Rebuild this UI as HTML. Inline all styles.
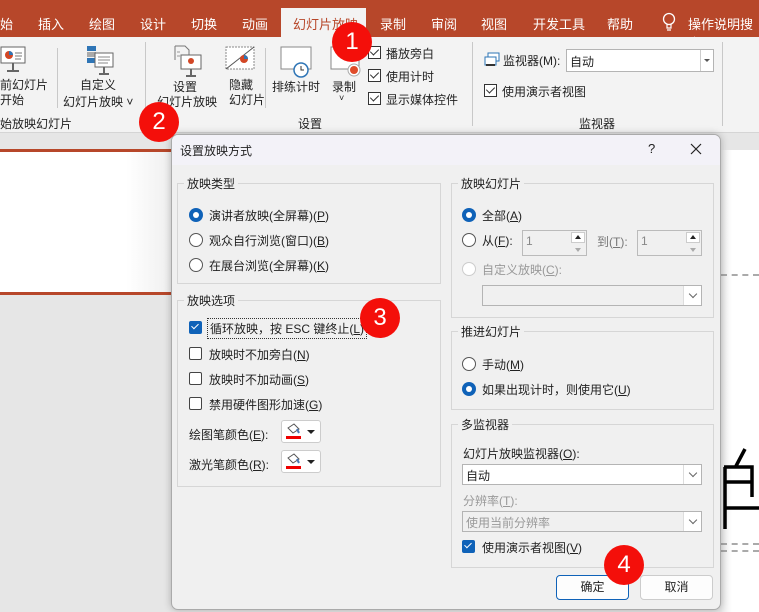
<!DOCTYPE html>
<html><head><meta charset="utf-8"><style>
*{margin:0;padding:0;box-sizing:border-box}
body{width:759px;height:612px;overflow:hidden;position:relative;background:#e6e6e6;font-family:"Liberation Sans","Noto Sans CJK SC",sans-serif;font-size:12px;color:#222}
.a{position:absolute;white-space:nowrap}
.tab{position:absolute;top:14px;color:#fff;font-size:13px}
.sep{position:absolute;width:1px;background:#c8c8c8}
.red{position:absolute;width:40px;height:40px;border-radius:50%;background:#f40f0a;color:#fff;font-size:24px;text-align:center;line-height:40px;font-family:"Liberation Sans",sans-serif}
.cb{position:absolute;width:13px;height:13px;border:1px solid #444;background:#fff;border-radius:2px}
.cbk{position:absolute;width:13px;height:13px;border:1px solid #333;background:#fff}
.cbk:after,.cbon:after{content:"";position:absolute;left:3px;top:0px;width:4px;height:7px;border:solid #333;border-width:0 1.5px 1.5px 0;transform:rotate(45deg)}
.cbon{position:absolute;width:13px;height:13px;background:#0f62b8;border-radius:2px}
.cbon:after{border-color:#fff;left:4px;top:1px;width:3px;height:6px}
.rad{position:absolute;width:14px;height:14px;border-radius:50%;border:1px solid #555;background:#fff}
.radon{position:absolute;width:14px;height:14px;border-radius:50%;background:#0f62b8}
.radon:after{content:"";position:absolute;left:4px;top:4px;width:6px;height:6px;border-radius:50%;background:#fff}
.grp{position:absolute;border:1px solid #d6d6d6}
.gl{position:absolute;top:-9px;left:6px;background:#f0f0f0;padding:0 3px}
.combo{position:absolute;border:1px solid #b4b4b4;background:#fff;height:21px}
.combo .dd{position:absolute;right:0;top:0;width:18px;height:19px;border-left:1px solid #ddd;background:#fff}
.combo .dd:after{content:"";position:absolute;left:6px;top:5px;width:5px;height:5px;border:solid #666;border-width:0 1px 1px 0;transform:rotate(45deg)}
.dis{color:#999}
u{text-decoration:underline}
</style></head><body>
<div class="a" style="left:0;top:0;width:759px;height:37px;background:#b7472a"></div>
<div class="a" style="left:281px;top:8px;width:85px;height:30px;background:#f3f3f3"></div>
<span class="tab" style="left:0">始</span>
<span class="tab" style="left:38px">插入</span>
<span class="tab" style="left:89px">绘图</span>
<span class="tab" style="left:140px">设计</span>
<span class="tab" style="left:191px">切换</span>
<span class="tab" style="left:242px">动画</span>
<span class="tab" style="left:293px;color:#b7472a">幻灯片放映</span>
<span class="tab" style="left:380px">录制</span>
<span class="tab" style="left:431px">审阅</span>
<span class="tab" style="left:481px">视图</span>
<span class="tab" style="left:533px">开发工具</span>
<span class="tab" style="left:607px">帮助</span>
<svg class="a" style="left:662px;top:12px" width="14" height="20"><circle cx="7" cy="7" r="5.5" fill="none" stroke="#fff" stroke-width="1.3"/><path d="M5 12v4h4v-4M5 18h4" stroke="#fff" stroke-width="1.2" fill="none"/></svg>
<span class="tab" style="left:688px">操作说明搜索</span>
<div class="a" style="left:0;top:37px;width:759px;height:96px;background:#f3f3f3;border-bottom:1px solid #d5d5d5"></div>
<div class="sep" style="left:57px;top:48px;height:60px"></div>
<div class="sep" style="left:145px;top:42px;height:84px"></div>
<div class="sep" style="left:265px;top:48px;height:60px"></div>
<div class="sep" style="left:472px;top:42px;height:84px"></div>
<div class="sep" style="left:722px;top:42px;height:84px"></div>
<svg class="a" style="left:0;top:44px" width="30" height="34"><rect x="1" y="3" width="24" height="16" fill="#fff" stroke="#666"/><circle cx="9" cy="11" r="4" fill="#d24726"/><path d="M9 11V7a4 4 0 0 1 4 4z" fill="#2e75b6"/><path d="M15 9h7M15 12h7M15 15h6" stroke="#777"/><path d="M13 19v7M7 27h12" stroke="#666" stroke-width="2"/></svg>
<svg class="a" style="left:86px;top:44px" width="30" height="34"><rect x="1" y="2" width="9" height="5" fill="#2e75b6"/><rect x="1" y="8" width="9" height="5" fill="#aaa"/><rect x="1" y="14" width="9" height="5" fill="#2e75b6"/><rect x="9" y="9" width="18" height="14" fill="#fff" stroke="#666"/><path d="M12 13h12M12 16h12M12 19h10" stroke="#888"/><path d="M18 23v6M13 30h10" stroke="#666" stroke-width="2"/></svg>
<svg class="a" style="left:171px;top:44px" width="34" height="36"><path d="M4 2h10l4 4v6" fill="none" stroke="#777"/><path d="M4 2v14" stroke="#777"/><rect x="10" y="11" width="20" height="14" fill="#fff" stroke="#666"/><circle cx="20" cy="17" r="3" fill="#d24726"/><path d="M6 8h3M6 12h3" stroke="#999"/><path d="M20 25v6M15 32h10" stroke="#666" stroke-width="2"/></svg>
<svg class="a" style="left:225px;top:46px" width="30" height="26"><rect x="1" y="1" width="28" height="22" fill="#fff" stroke="#888" stroke-dasharray="2 1"/><path d="M1 23L29 1" stroke="#555"/><circle cx="19" cy="13" r="4" fill="#d24726"/><path d="M19 13v-4a4 4 0 0 1 4 4z" fill="#2e75b6"/></svg>
<svg class="a" style="left:280px;top:46px" width="34" height="34"><rect x="1" y="1" width="30" height="22" fill="#fff" stroke="#888"/><circle cx="21" cy="24" r="7" fill="#fff" stroke="#2e75b6" stroke-width="1.5"/><path d="M21 20v4h3" stroke="#333" fill="none"/></svg>
<svg class="a" style="left:330px;top:46px" width="34" height="34"><rect x="1" y="1" width="28" height="22" fill="#fff" stroke="#888"/><circle cx="24" cy="24" r="6" fill="#fff" stroke="#aaa"/><circle cx="24" cy="24" r="4" fill="#e04c2a"/></svg>
<div class="a" style="left:0;top:78px;font-size:12px;line-height:15px">前幻灯片<br>开始</div>
<div class="a" style="left:80px;top:78px;line-height:15px">自定义</div>
<div class="a" style="left:63px;top:93px">幻灯片放映 ˅</div>
<div class="a" style="left:173px;top:78px">设置</div>
<div class="a" style="left:157px;top:93px">幻灯片放映</div>
<div class="a" style="left:229px;top:78px;line-height:15px">隐藏<br>幻灯片</div>
<div class="a" style="left:272px;top:78px">排练计时</div>
<div class="a" style="left:332px;top:78px">录制</div>
<div class="a" style="left:339px;top:93px;font-size:9px">˅</div>
<div class="cbk" style="left:368px;top:46px"></div><div class="a" style="left:386px;top:45px">播放旁白</div>
<div class="cbk" style="left:368px;top:69px"></div><div class="a" style="left:386px;top:68px">使用计时</div>
<div class="cbk" style="left:368px;top:92px"></div><div class="a" style="left:386px;top:91px">显示媒体控件</div>
<div class="a" style="left:0;top:115px">始放映幻灯片</div>
<div class="a" style="left:298px;top:115px">设置</div>
<div class="a" style="left:579px;top:115px">监视器</div>
<svg class="a" style="left:484px;top:52px" width="16" height="15"><rect x="4" y="1" width="11" height="8" fill="#fff" stroke="#2e75b6"/><rect x="1" y="5" width="11" height="8" fill="#fff" stroke="#2e75b6"/><path d="M2 13h9" stroke="#333" stroke-width="2"/></svg>
<div class="a" style="left:503px;top:52px">监视器(M):</div>
<div class="combo" style="left:566px;top:49px;width:148px;height:23px"><span class="a" style="left:3px;top:3px">自动</span><div class="a" style="right:0;top:0;width:13px;height:21px;border-left:1px solid #ccc"></div><div class="a" style="right:3px;top:9px;border:3px solid transparent;border-top:3px solid #555"></div></div>
<div class="cbk" style="left:484px;top:84px"></div><div class="a" style="left:502px;top:83px">使用演示者视图</div>
<div class="a" style="left:0;top:149px;width:180px;height:3px;background:#b7472a"></div>
<div class="a" style="left:0;top:152px;width:180px;height:140px;background:linear-gradient(90deg,#fff 70%,#ececec)"></div>
<div class="a" style="left:0;top:292px;width:180px;height:3px;background:#b7472a"></div>
<div class="a" style="left:720px;top:150px;width:39px;height:462px;background:linear-gradient(90deg,#e6e6e6,#fff 30%)"></div>
<div class="a" style="left:721px;top:274px;width:38px;border-top:2px dashed #aaa"></div>
<div class="a" style="left:721px;top:543px;width:38px;border-top:2px dashed #aaa"></div>
<div class="a" style="left:721px;top:550px;width:38px;border-top:2px dashed #aaa"></div>
<svg class="a" style="left:720px;top:440px" width="39" height="95"><path d="M25 9L16 26M4 27h28v30M4 42h28M4 68h35M5 27v62" stroke="#000" stroke-width="3.5" fill="none"/></svg>
<div class="a" style="left:171px;top:134px;width:550px;height:476px;background:#f0f0f0;border:1px solid #aaa;border-radius:7px;box-shadow:0 0 8px rgba(0,0,0,.25);overflow:hidden">
<div class="a" style="left:0;top:0;width:550px;height:30px;background:#f3f2f8"></div>
</div>
<div class="a" style="left:180px;top:142px;font-size:12px">设置放映方式</div>
<div class="a" style="left:648px;top:141px;font-size:13px">?</div>
<svg class="a" style="left:690px;top:143px" width="12" height="12"><path d="M1 1l10 10M11 1L1 11" stroke="#222" stroke-width="1.2"/></svg>
<div class="grp" style="left:177px;top:183px;width:264px;height:101px"><span class="gl">放映类型</span></div>
<div class="radon" style="left:189px;top:208px"></div><div class="a" style="left:209px;top:207px">演讲者放映(全屏幕)(<u>P</u>)</div>
<div class="rad" style="left:189px;top:233px"></div><div class="a" style="left:209px;top:232px">观众自行浏览(窗口)(<u>B</u>)</div>
<div class="rad" style="left:189px;top:258px"></div><div class="a" style="left:209px;top:257px">在展台浏览(全屏幕)(<u>K</u>)</div>
<div class="grp" style="left:177px;top:300px;width:264px;height:187px"><span class="gl">放映选项</span></div>
<div class="cbon" style="left:189px;top:321px"></div><div class="a" style="left:207px;top:318px;border:1px dotted #333;padding:1px 2px">循环放映，按 ESC 键终止(<u>L</u>)</div>
<div class="cb" style="left:189px;top:347px"></div><div class="a" style="left:209px;top:346px">放映时不加旁白(<u>N</u>)</div>
<div class="cb" style="left:189px;top:372px"></div><div class="a" style="left:209px;top:371px">放映时不加动画(<u>S</u>)</div>
<div class="cb" style="left:189px;top:397px"></div><div class="a" style="left:209px;top:396px">禁用硬件图形加速(<u>G</u>)</div>
<div class="a" style="left:189px;top:426px">绘图笔颜色(<u>E</u>):</div>
<div class="a" style="left:281px;top:420px;width:40px;height:23px;border:1px solid #ccc;border-radius:3px;background:#fff"><svg width="40" height="23"><path d="M6 7l6-4 5 5-6 4z" fill="#fff" stroke="#555"/><path d="M15 8l2 4" stroke="#4a78b5" stroke-width="2"/><rect x="4" y="15" width="15" height="3" fill="#e00"/><path d="M25 9h8l-4 4z" fill="#222"/></svg></div>
<div class="a" style="left:189px;top:456px">激光笔颜色(<u>R</u>):</div>
<div class="a" style="left:281px;top:450px;width:40px;height:23px;border:1px solid #ccc;border-radius:3px;background:#fff"><svg width="40" height="23"><path d="M6 7l6-4 5 5-6 4z" fill="#fff" stroke="#555"/><path d="M15 8l2 4" stroke="#4a78b5" stroke-width="2"/><rect x="4" y="15" width="15" height="3" fill="#e00"/><path d="M25 9h8l-4 4z" fill="#222"/></svg></div>
<div class="grp" style="left:451px;top:183px;width:263px;height:135px"><span class="gl">放映幻灯片</span></div>
<div class="radon" style="left:462px;top:208px"></div><div class="a" style="left:482px;top:207px">全部(<u>A</u>)</div>
<div class="rad" style="left:462px;top:233px"></div><div class="a" style="left:482px;top:232px">从(<u>F</u>):</div>
<div class="a" style="left:522px;top:230px;width:65px;height:26px;border:1px solid #bbb;color:#888;padding:3px 3px">1<div class="a" style="right:1px;top:1px;width:14px;height:11px;background:#fff;border:1px solid #ccc"></div><div class="a" style="right:5px;top:4px;border:3px solid transparent;border-bottom:4px solid #222;border-top:0"></div><div class="a" style="right:5px;top:17px;border:3px solid transparent;border-top:4px solid #aaa;border-bottom:0"></div></div>
<div class="a dis" style="left:597px;top:233px;color:#777">到(<u>T</u>):</div>
<div class="a" style="left:637px;top:230px;width:65px;height:26px;border:1px solid #bbb;color:#888;padding:3px 3px">1<div class="a" style="right:1px;top:1px;width:14px;height:11px;background:#fff;border:1px solid #ccc"></div><div class="a" style="right:5px;top:4px;border:3px solid transparent;border-bottom:4px solid #222;border-top:0"></div><div class="a" style="right:5px;top:17px;border:3px solid transparent;border-top:4px solid #aaa;border-bottom:0"></div></div>
<div class="rad" style="left:462px;top:262px;border-color:#ccc"></div><div class="a dis" style="left:482px;top:261px">自定义放映(<u>C</u>):</div>
<div class="combo" style="left:482px;top:285px;width:220px;background:#f0f0f0"><div class="dd"></div></div>
<div class="grp" style="left:451px;top:331px;width:263px;height:79px"><span class="gl">推进幻灯片</span></div>
<div class="rad" style="left:462px;top:357px"></div><div class="a" style="left:482px;top:356px">手动(<u>M</u>)</div>
<div class="radon" style="left:462px;top:382px"></div><div class="a" style="left:482px;top:381px">如果出现计时，则使用它(<u>U</u>)</div>
<div class="grp" style="left:451px;top:424px;width:263px;height:144px"><span class="gl">多监视器</span></div>
<div class="a" style="left:463px;top:445px">幻灯片放映监视器(<u>O</u>):</div>
<div class="combo" style="left:462px;top:464px;width:240px"><span class="a" style="left:3px;top:2px">自动</span><div class="dd"></div></div>
<div class="a dis" style="left:463px;top:492px">分辨率(<u>T</u>):</div>
<div class="combo" style="left:462px;top:511px;width:240px;background:#f0f0f0"><span class="a dis" style="left:3px;top:2px">使用当前分辨率</span><div class="dd"></div></div>
<div class="cbon" style="left:462px;top:540px"></div><div class="a" style="left:482px;top:539px">使用演示者视图(<u>V</u>)</div>
<div class="a" style="left:556px;top:575px;width:73px;height:25px;border:1px solid #0f62b8;border-radius:4px;background:#fdfdfd;text-align:center;line-height:23px">确定</div>
<div class="a" style="left:640px;top:575px;width:73px;height:25px;border:1px solid #ccc;border-radius:4px;background:#fdfdfd;text-align:center;line-height:23px">取消</div>
<div class="red" style="left:332px;top:22px">1</div>
<div class="red" style="left:139px;top:102px">2</div>
<div class="red" style="left:360px;top:298px">3</div>
<div class="red" style="left:604px;top:545px">4</div>
</body></html>
